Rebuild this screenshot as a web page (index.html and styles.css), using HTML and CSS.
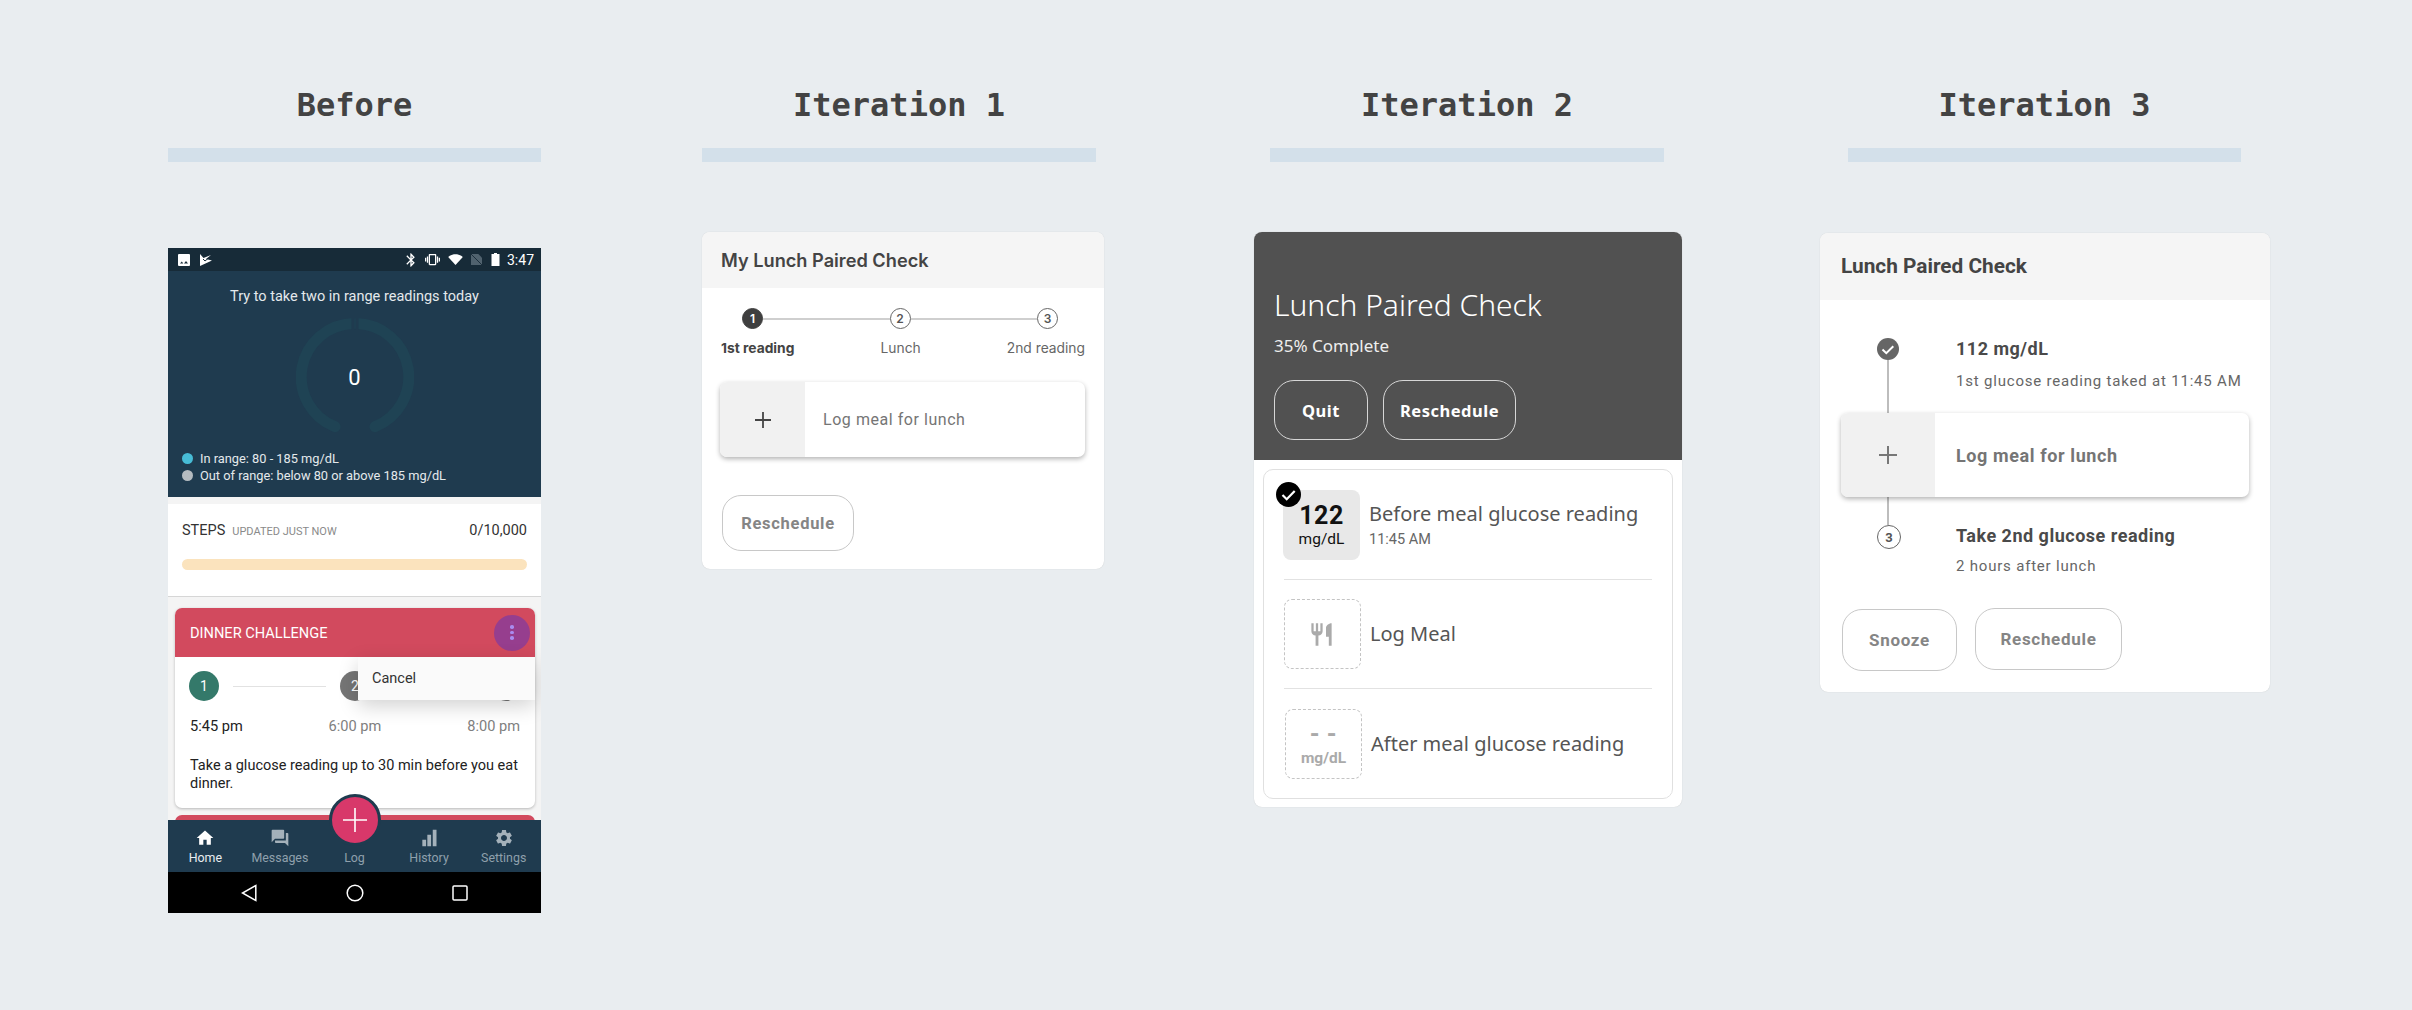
FILE: index.html
```html
<!DOCTYPE html>
<html lang="en">
<head>
  <meta charset="UTF-8" />
  <meta name="viewport" content="width=device-width, initial-scale=1.0"/>
  <title>Lunch Paired Check iterations</title>
  <link rel="stylesheet" href="styles.css">
</head>
<body>
  <main class="board">

    <!-- BEFORE -->
    <section class="column col-before">
      <header class="col-head">
        <h2>Before</h2>
        <div class="col-bar"></div>
      </header>

      <div class="phone">
        <div class="status-bar">
          <div class="status-left">
            <svg class="st-icon" viewBox="0 0 12 12"><rect width="12" height="12" rx="1" fill="#fff"/><path d="M2 9.500l1.800-2 1.500 2zM6 9.500l2-2.600 2 2.600z" fill="#172b38"/></svg>
            <svg class="st-icon" viewBox="0 0 12 12"><path d="M0 0l3.500 4L11 1 6 5l6 1.500L0 12z" fill="#fff"/><path d="M3 5l2 2 3-2.500" stroke="#172b38" stroke-width="1" fill="none"/></svg>
          </div>
          <div class="status-right">
            <svg class="st-bt" viewBox="0 0 24 24"><path fill="#fff" d="M17.710 7.710L12 2h-1v7.590L6.410 5 5 6.410 10.590 12 5 17.590 6.410 19 11 14.410V22h1l5.710-5.710-4.300-4.290 4.300-4.290zM13 5.830l1.880 1.880L13 9.590V5.830zm1.880 10.460L13 18.170v-3.760l1.880 1.880z"/></svg>
            <svg class="st-vib" viewBox="0 0 24 24"><path fill="#fff" d="M0 15h2V9H0v6zm3 2h2V7H3v10zm19-8v6h2V9h-2zm-3 8h2V7h-2v10zM16.500 3h-9C6.670 3 6 3.670 6 4.500v15c0 .83.670 1.500 1.500 1.500h9c.83 0 1.500-.67 1.500-1.500v-15c0-.83-.67-1.500-1.500-1.500zM16 19H8V5h8v14z"/></svg>
            <svg class="st-wifi" viewBox="0 0 16 12"><path fill="#fff" d="M8 12L0 3.200C4.400-.6 11.600-.6 16 3.200z"/></svg>
            <svg class="st-sim" viewBox="0 0 12 12"><path fill="#50626e" d="M0 0h8l4 4v8H0z"/><path d="M0 0l12 12" stroke="#172b38" stroke-width="1"/></svg>
            <svg class="st-bat" viewBox="0 0 8 13"><path fill="#fff" d="M2.500 0h3v1H8v12H0V1h2.500z"/></svg>
            <span class="status-time">3:47</span>
          </div>
        </div>

        <div class="goal-panel">
          <p class="goal-text">Try to take two in range readings today</p>
          <div class="goal-ring">
            <svg viewBox="0 0 118 118" width="118" height="118">
              <path d="M57 5.500A53.500 53.500 0 0 0 39 108.700" fill="none" stroke="#1f4354" stroke-width="11" stroke-linecap="round"/>
              <path d="M61 5.500A53.500 53.500 0 0 1 79 108.700" fill="none" stroke="#1f4354" stroke-width="11" stroke-linecap="round"/>
              <rect x="55.500" y="0" width="3" height="12" fill="#1f3b4f"/>
              <rect x="59.500" y="0" width="3" height="12" fill="#1f3b4f"/>
            </svg>
            <span class="goal-count">0</span>
          </div>
          <ul class="legend">
            <li><span class="dot dot-in"></span>In range: 80 - 185 mg/dL</li>
            <li><span class="dot dot-out"></span>Out of range: below 80 or above 185 mg/dL</li>
          </ul>
        </div>

        <div class="feed">
          <div class="steps">
            <div class="steps-row">
              <span class="steps-label">STEPS</span>
              <span class="steps-updated">UPDATED JUST NOW</span>
              <span class="steps-count">0/10,000</span>
            </div>
            <div class="steps-track"></div>
          </div>

          <div class="challenge">
            <div class="challenge-head">
              <span>DINNER CHALLENGE</span>
              <span class="kebab"><i></i><i></i><i></i></span>
            </div>
            <div class="challenge-steps">
              <span class="num num-active">1</span>
              <span class="num-line"></span>
              <span class="num num-next">2</span>
              <span class="num-line"></span>
              <span class="num num-next">3</span>
            </div>
            <div class="challenge-times">
              <span class="time-now">5:45 pm</span>
              <span>6:00 pm</span>
              <span>8:00 pm</span>
            </div>
            <p class="challenge-text">Take a glucose reading up to 30 min before you eat dinner.</p>
            <div class="popup-menu">Cancel</div>
          </div>
          <div class="challenge-next"></div>
        </div>

        <nav class="tabs">
          <button class="fab" aria-label="Log">
            <svg viewBox="0 0 24 24" width="24" height="24"><path d="M12 0v24M0 12h24" stroke="#fff" stroke-width="1.600"/></svg>
          </button>
          <div class="tab tab-active">
            <svg viewBox="0 0 24 24"><path d="M10 20v-6h4v6h5v-8h3L12 3 2 12h3v8z"/></svg>
            <span>Home</span>
          </div>
          <div class="tab">
            <svg viewBox="0 0 24 24"><path d="M21 6h-2v9H6v2c0 .55.45 1 1 1h11l4 4V7c0-.55-.45-1-1-1zm-4 6V3c0-.55-.45-1-1-1H3c-.55 0-1 .45-1 1v14l4-4h10c.55 0 1-.45 1-1z"/></svg>
            <span>Messages</span>
          </div>
          <div class="tab">
            <svg viewBox="0 0 24 24"></svg>
            <span>Log</span>
          </div>
          <div class="tab">
            <svg viewBox="0 0 24 24"><path d="M4 14h4.500v8H4zM10 8h4.500v14H10zM16.500 2H21v20h-4.500z"/></svg>
            <span>History</span>
          </div>
          <div class="tab">
            <svg viewBox="0 0 24 24"><path d="M19.14 12.94c.04-.3.06-.61.06-.94 0-.32-.02-.64-.07-.94l2.03-1.58c.18-.14.23-.41.12-.61l-1.92-3.32c-.12-.22-.37-.29-.59-.22l-2.39.96c-.5-.38-1.03-.7-1.62-.94l-.36-2.54c-.04-.24-.24-.41-.48-.41h-3.84c-.24 0-.43.17-.47.41l-.36 2.54c-.59.24-1.13.57-1.62.94l-2.39-.96c-.22-.08-.47 0-.59.22L2.74 8.87c-.12.21-.08.47.12.61l2.03 1.58c-.05.3-.09.63-.09.94s.02.64.07.94l-2.03 1.58c-.18.14-.23.41-.12.61l1.92 3.32c.12.22.37.29.59.22l2.39-.96c.5.38 1.03.7 1.62.94l.36 2.54c.05.24.24.41.48.41h3.84c.24 0 .44-.17.47-.41l.36-2.54c.59-.24 1.13-.56 1.62-.94l2.39.96c.22.08.47 0 .59-.22l1.92-3.32c.12-.22.07-.47-.12-.61l-2.01-1.58zM12 15.600c-1.98 0-3.6-1.62-3.6-3.6s1.62-3.6 3.6-3.6 3.6 1.62 3.6 3.6-1.62 3.6-3.6 3.6z"/></svg>
            <span>Settings</span>
          </div>
        </nav>

        <div class="soft-keys">
          <svg viewBox="0 0 16 18" width="16" height="18"><path d="M14.800 1.500v15L1.500 9z" fill="none" stroke="#fff" stroke-width="1.500"/></svg>
          <svg viewBox="0 0 18 18" width="18" height="18"><circle cx="9" cy="9" r="7.800" fill="none" stroke="#fff" stroke-width="1.500"/></svg>
          <svg viewBox="0 0 16 16" width="16" height="16"><rect x="1" y="1" width="14" height="14" rx="1" fill="none" stroke="#fff" stroke-width="1.500"/></svg>
        </div>
      </div>
    </section>

    <!-- ITERATION 1 -->
    <section class="column col-one">
      <header class="col-head">
        <h2>Iteration 1</h2>
        <div class="col-bar"></div>
      </header>

      <div class="card one-card">
        <div class="card-title one-title">My Lunch Paired Check</div>
        <div class="one-body">
          <div class="stepper">
            <div class="stepper-row">
              <span class="step-num step-current">1</span>
              <span class="step-line"></span>
              <span class="step-num">2</span>
              <span class="step-line"></span>
              <span class="step-num">3</span>
            </div>
            <div class="stepper-labels">
              <span class="step-on">1st reading</span>
              <span>Lunch</span>
              <span>2nd reading</span>
            </div>
          </div>
          <div class="log-card one-log">
            <div class="log-plus">
              <svg viewBox="0 0 18 18" width="18" height="18"><path d="M9 1v16M1 9h16" stroke="#444" stroke-width="1.800"/></svg>
            </div>
            <span class="log-text">Log meal for lunch</span>
          </div>
          <button class="pill one-pill">Reschedule</button>
        </div>
      </div>
    </section>

    <!-- ITERATION 2 -->
    <section class="column col-two">
      <header class="col-head">
        <h2>Iteration 2</h2>
        <div class="col-bar"></div>
      </header>

      <div class="card two-card">
        <div class="two-head">
          <h3>Lunch Paired Check</h3>
          <p>35% Complete</p>
          <div class="two-actions">
            <button class="pill pill-dark quit">Quit</button>
            <button class="pill pill-dark resched">Reschedule</button>
          </div>
        </div>
        <div class="two-list">
          <div class="two-row">
            <div class="tile tile-done">
              <svg class="tile-check" viewBox="0 0 25 25" width="25" height="25"><circle cx="12.500" cy="12.500" r="12.500" fill="#000"/><path d="M6.500 13l4.200 4.200 8-8.200" fill="none" stroke="#fff" stroke-width="2.200"/></svg>
              <strong>122</strong>
              <span>mg/dL</span>
            </div>
            <div class="two-copy">
              <div class="two-name">Before meal glucose reading</div>
              <div class="two-time">11:45 AM</div>
            </div>
          </div>
          <div class="two-row">
            <div class="tile tile-empty">
              <svg class="fork" viewBox="0 0 24 24" width="27" height="27"><path fill="#aaa" d="M11 9H9V2H7v7H5V2H3v7c0 2.120 1.660 3.840 3.750 3.970V22h2.500v-9.030C11.340 12.840 13 11.120 13 9V2h-2v7zm5-3v8h2.500v8H21V2c-2.760 0-5 2.240-5 4z"/></svg>
            </div>
            <div class="two-name">Log Meal</div>
          </div>
          <div class="two-row">
            <div class="tile tile-empty tile-wait">
              <strong>- -</strong>
              <span>mg/dL</span>
            </div>
            <div class="two-name">After meal glucose reading</div>
          </div>
        </div>
      </div>
    </section>

    <!-- ITERATION 3 -->
    <section class="column col-three">
      <header class="col-head">
        <h2>Iteration 3</h2>
        <div class="col-bar"></div>
      </header>

      <div class="card three-card">
        <div class="card-title three-title">Lunch Paired Check</div>
        <div class="three-body">
          <div class="tl-row tl-first">
            <div class="tl-rail">
              <svg viewBox="0 0 22 22" width="22" height="22"><circle cx="11" cy="11" r="11" fill="#666"/><path d="M5.500 11.500l3.800 3.700 7-7" fill="none" stroke="#fff" stroke-width="2"/></svg>
            </div>
            <div>
              <div class="tl-head">112 mg/dL</div>
              <div class="tl-sub">1st glucose reading taked at 11:45 AM</div>
            </div>
          </div>
          <div class="log-card three-log">
            <div class="log-plus">
              <svg viewBox="0 0 18 18" width="18" height="18"><path d="M9 0v18M0 9h18" stroke="#777" stroke-width="2"/></svg>
            </div>
            <span class="log-text">Log meal for lunch</span>
          </div>
          <div class="tl-row tl-last">
            <div class="tl-rail">
              <span class="step-num tl-num">3</span>
            </div>
            <div>
              <div class="tl-head">Take 2nd glucose reading</div>
              <div class="tl-sub">2 hours after lunch</div>
            </div>
          </div>
          <div class="three-actions">
            <button class="pill pill-snooze">Snooze</button>
            <button class="pill pill-resched">Reschedule</button>
          </div>
        </div>
      </div>
    </section>

  </main>
</body>
</html>
```

FILE: styles.css
```css
* { box-sizing: border-box; }
html, body { height: 100%; }
body {
  margin: 0;
  background: #e9edf0;
  font-family: 'Roboto', sans-serif;
  overflow: hidden;
}
button { font-family: inherit; background: none; cursor: pointer; }

.board {
  display: flex;
  align-items: flex-start;
  padding-left: 168px;
}
.column { flex: none; }
.col-before { width: 373px; }
.col-one { width: 402px; margin-left: 161px; }
.col-two { width: 428px; margin-left: 150px; }
.col-three { width: 450px; margin-left: 138px; }

.col-head { height: 232px; padding-top: 85px; }
.col-head h2 {
  margin: 0;
  height: 40px;
  line-height: 40px;
  text-align: center;
  font-family: 'DejaVu Sans Mono', monospace;
  font-size: 32px;
  font-weight: 700;
  color: #434343;
}
.col-bar { height: 14px; margin-top: 23px; background: #d3e0ea; }
.col-before .col-head { height: 248px; }
.col-one .col-head { width: 394px; }
.col-two .col-head { width: 394px; margin-left: 16px; }
.col-three .col-head { width: 393px; margin-left: 28px; height: 233px; }

/* phone */
.phone {
  position: relative;
  height: 665px;
  background: #f4f4f4;
  display: flex;
  flex-direction: column;
}
.status-bar {
  height: 23px;
  background: #172b38;
  display: flex;
  justify-content: space-between;
  align-items: center;
  padding: 0 7px 0 10px;
  color: #fff;
  font-size: 14px;
}
.status-left { display: flex; gap: 10px; }
.status-right { display: flex; align-items: center; gap: 5px; }
.status-right svg { display: block; }
.st-icon { width: 12px; height: 12px; display: block; }
.st-bt { width: 16px; height: 16px; }
.st-vib { width: 17px; height: 15px; }
.st-wifi { width: 15px; height: 11px; margin-left: 2px; }
.st-sim { width: 11px; height: 11px; margin-left: 3px; }
.st-bat { width: 9px; height: 13px; margin-left: 4px; }
.status-time { margin-left: 2px; }

.goal-panel {
  height: 226px;
  background: #1f3b4f;
  color: #e4e9ec;
  padding-top: 17px;
}
.goal-text { margin: 0; text-align: center; font-size: 14.5px; line-height: 18px; }
.goal-ring { position: relative; width: 118px; height: 118px; margin: 12px auto 0; }
.goal-ring svg { display: block; }
.goal-count {
  position: absolute;
  inset: 0;
  display: flex;
  align-items: center;
  justify-content: center;
  color: #fff;
  font-size: 22px;
}
.legend {
  list-style: none;
  margin: 14px 0 0;
  padding: 0 0 0 14px;
  font-size: 12.8px;
  line-height: 17px;
}
.legend li { display: flex; align-items: center; }
.dot { width: 11px; height: 11px; border-radius: 50%; margin-right: 7px; }
.dot-in { background: #47bcd6; }
.dot-out { background: #b4bbc0; }

.feed { position: relative; flex: 1; padding-top: 7px; overflow: hidden; }
.steps {
  height: 93px;
  background: #fff;
  border-bottom: 1px solid #d6d6d6;
  padding: 18px 14px 0;
}
.steps-row { display: flex; align-items: baseline; height: 20px; color: #333; font-size: 14.5px; }
.steps-updated { margin-left: 7px; color: #8a8a8a; font-size: 11px; }
.steps-count { margin-left: auto; }
.steps-track { height: 11px; margin-top: 17px; border-radius: 6px; background: #fbe3bd; }

.challenge {
  position: relative;
  margin: 11px 6px 0 7px;
  height: 200px;
  background: #fff;
  border-radius: 7px;
  box-shadow: 0 1px 3px rgba(0,0,0,0.25);
}
.challenge-head {
  height: 49px;
  background: #d24a5e;
  border-radius: 7px 7px 0 0;
  color: #fff;
  font-size: 14.6px;
  padding: 0 5px 0 15px;
  display: flex;
  justify-content: space-between;
  align-items: center;
}
.kebab {
  width: 36px;
  height: 36px;
  border-radius: 50%;
  background: #963e8e;
  display: flex;
  flex-direction: column;
  align-items: center;
  justify-content: center;
  gap: 2px;
}
.kebab i { width: 3.500px; height: 3.500px; border-radius: 50%; background: #a98cf0; }
.challenge-steps { display: flex; align-items: center; gap: 14px; padding: 14px 14px 0; }
.num {
  flex: none;
  width: 30px;
  height: 30px;
  border-radius: 50%;
  color: #fff;
  font-size: 14px;
  display: flex;
  align-items: center;
  justify-content: center;
}
.num-active { background: #34796a; }
.num-next { background: #757575; }
.num-line { flex: 1; height: 1px; background: #e2e2e2; }
.challenge-times {
  display: flex;
  justify-content: space-between;
  padding: 15px 15px 0;
  color: #808080;
  font-size: 14.6px;
  line-height: 20px;
}
.time-now { color: #222; }
.challenge-text {
  margin: 21px 15px 0;
  color: #222;
  font-size: 14.5px;
  line-height: 17.5px;
}
.popup-menu {
  position: absolute;
  top: 49px;
  right: 0;
  width: 177px;
  height: 43px;
  padding: 0 14px;
  line-height: 44px;
  background: #fafafa;
  color: #333;
  font-size: 14.5px;
  box-shadow: 0 6px 20px rgba(0,0,0,0.18);
}
.challenge-next {
  height: 20px;
  margin: 7px 6px 0 7px;
  background: #d24a5e;
  border-radius: 7px 7px 0 0;
}

.tabs {
  position: relative;
  flex: none;
  height: 52px;
  background: #1f3b4f;
  display: flex;
}
.tab {
  flex: 1;
  display: flex;
  flex-direction: column;
  align-items: center;
  color: #8fa0ac;
  font-size: 12.4px;
  padding-top: 8px;
}
.tab svg { width: 20px; height: 20px; fill: #a4b1ba; display: block; }
.tab span { margin-top: 2px; line-height: 16px; }
.tab-active, .tab-active span { color: #e9edf0; }
.tab-active svg { fill: #fff; }
.fab {
  position: absolute;
  z-index: 2;
  top: -26px;
  left: 50%;
  margin-left: -26px;
  width: 52px;
  height: 52px;
  padding: 0;
  border-radius: 50%;
  border: 3px solid #1f3b4f;
  background: #d8386a;
  display: flex;
  align-items: center;
  justify-content: center;
}
.soft-keys {
  flex: none;
  height: 41px;
  background: #000;
  display: flex;
  align-items: center;
  justify-content: space-between;
  padding: 0 73px;
}

/* shared cards */
.card { background: #fff; border-radius: 8px; overflow: hidden; box-shadow: 0 0 1px rgba(0,0,0,0.2); }
.card-title { background: #f5f5f5; color: #444; }
.pill {
  border: 1.500px solid #c8c8c8;
  border-radius: 19px;
  background: #fff;
  color: #858585;
  font-weight: 600;
}
.log-card {
  display: flex;
  align-items: center;
  background: #fff;
  border-radius: 7px;
  overflow: hidden;
  box-shadow: 0 2px 5px rgba(0,0,0,0.3);
}
.log-plus {
  align-self: stretch;
  display: flex;
  align-items: center;
  justify-content: center;
  background: #f1f1f1;
}

/* iteration 1 */
.one-card { height: 337px; }
.one-title {
  height: 56px;
  line-height: 56px;
  padding-left: 19px;
  font-family: 'Inter', sans-serif;
  font-size: 18.2px;
  font-weight: 600;
}
.one-body { padding: 20px 19px 0 18px; }
.stepper-row { display: flex; align-items: center; padding: 0 27px 0 22px; }
.step-num {
  flex: none;
  width: 21px;
  height: 21px;
  border-radius: 50%;
  border: 1.500px solid #666;
  background: #fff;
  color: #555;
  font-family: 'Inter', sans-serif;
  font-size: 12px;
  font-weight: 600;
  display: flex;
  align-items: center;
  justify-content: center;
}
.step-current { background: #3f3f3f; border-color: #3f3f3f; color: #fff; }
.step-line { flex: 1; height: 2px; background: #cfcfcf; }
.stepper-labels {
  display: flex;
  justify-content: space-between;
  margin-top: 11px;
  padding-left: 1px;
  font-family: 'Inter', sans-serif;
  font-size: 13.8px;
  line-height: 16px;
  color: #666;
}
.step-on { color: #444; font-weight: 700; }
.one-log { height: 75px; margin-top: 26px; }
.one-log .log-plus { width: 85px; }
.log-text { color: #757575; }
.one-log .log-text { margin-left: 18px; font-size: 16px; letter-spacing: 0.55px; }
.one-pill {
  display: block;
  width: 132px;
  height: 56px;
  margin: 38px 0 0 2px;
  padding: 0;
  font-size: 16.5px;
  font-weight: 700;
  letter-spacing: 0.7px;
}

/* iteration 2 */
.two-card { height: 575px; font-family: 'Noto Sans', sans-serif; }
.two-head { height: 228px; padding: 53px 20px 0; background: #515151; color: #fff; }
.two-head h3 { margin: 0; font-size: 30px; font-weight: 300; line-height: 40px; }
.two-head p { margin: 9px 0 0; font-size: 17px; line-height: 24px; color: #eee; }
.two-actions { display: flex; gap: 15px; margin-top: 22px; }
.pill-dark {
  height: 60px;
  background: transparent;
  border-color: #d6d6d6;
  border-radius: 20px;
  color: #fff;
  font-family: 'Noto Sans', sans-serif;
  font-size: 16.5px;
  font-weight: 700;
  letter-spacing: 0.5px;
}
.quit { width: 94px; }
.resched { width: 133px; padding: 0; }
.two-list {
  margin: 9px 9px 0;
  height: 330px;
  padding: 20px 20px 0;
  border: 1px solid #e0e0e0;
  border-radius: 10px;
}
.two-row {
  display: flex;
  align-items: center;
  height: 90px;
  margin-bottom: 19px;
  padding-bottom: 19px;
  gap: 9px;
  border-bottom: 1px solid #e2e2e2;
  color: #555;
}
.two-row:last-child { border-bottom: none; }
.two-row:last-child .tile { margin-left: 1px; }
.tile {
  position: relative;
  flex: none;
  width: 77px;
  height: 70px;
  border-radius: 8px;
  display: flex;
  flex-direction: column;
  align-items: center;
  justify-content: center;
}
.tile strong { font-family: 'Roboto', sans-serif; font-size: 25px; line-height: 28px; letter-spacing: 0.5px; }
.tile span { font-family: 'Roboto', sans-serif; font-size: 15.5px; line-height: 18px; }
.tile-done { background: #e8e8e8; color: #111; margin-left: -1px; }
.tile-check { position: absolute; top: -8px; left: -7px; }
.tile-empty { border: 1.500px dashed #c4c4c4; color: #aaa; }
.tile-wait span { font-weight: 700; }
.fork { margin-left: -2px; }
.two-name { font-size: 20px; line-height: 24px; }
.two-time { margin-top: 5px; font-family: 'Roboto', sans-serif; font-size: 14.5px; line-height: 18px; color: #666; }

/* iteration 3 */
.three-card { height: 459px; }
.three-title {
  height: 67px;
  line-height: 66px;
  padding-left: 21px;
  font-size: 20.8px;
  font-weight: 700;
}
.three-body { padding: 0 21px; }
.tl-row { display: flex; }
.tl-rail {
  position: relative;
  flex: none;
  width: 115px;
  padding-left: 36px;
}
.tl-head { color: #4a4a4a; font-size: 18px; font-weight: 700; line-height: 22px; letter-spacing: 0.5px; }
.tl-sub { color: #666; font-size: 15px; line-height: 20px; letter-spacing: 0.8px; }
.tl-first { height: 113px; padding-top: 38px; }
.tl-first .tl-sub { margin-top: 11px; }
.tl-first .tl-rail::after {
  content: "";
  position: absolute;
  left: 46px;
  top: 22px;
  width: 2px;
  height: 53px;
  background: #bdbdbd;
}
.three-log { height: 84px; z-index: 1; position: relative; }
.three-log .log-plus { width: 94px; }
.three-log .log-text { margin-left: 21px; font-size: 18px; font-weight: 700; letter-spacing: 0.6px; }
.tl-last { height: 112px; padding-top: 28px; }
.tl-last .tl-sub { margin-top: 9px; }
.tl-last .tl-rail::before {
  content: "";
  position: absolute;
  left: 46px;
  top: -28px;
  width: 2px;
  height: 28px;
  background: #bdbdbd;
}
.tl-num { width: 24px; height: 24px; font-family: 'Roboto', sans-serif; font-size: 13px; font-weight: 700; }
.three-actions { display: flex; gap: 18px; padding-left: 1px; }
.pill-snooze, .pill-resched { border-radius: 20px; font-size: 17px; font-weight: 700; letter-spacing: 0.7px; padding: 0; }
.pill-snooze { width: 115px; height: 62px; }
.pill-resched { width: 147px; height: 62px; margin-top: -1px; }
```
